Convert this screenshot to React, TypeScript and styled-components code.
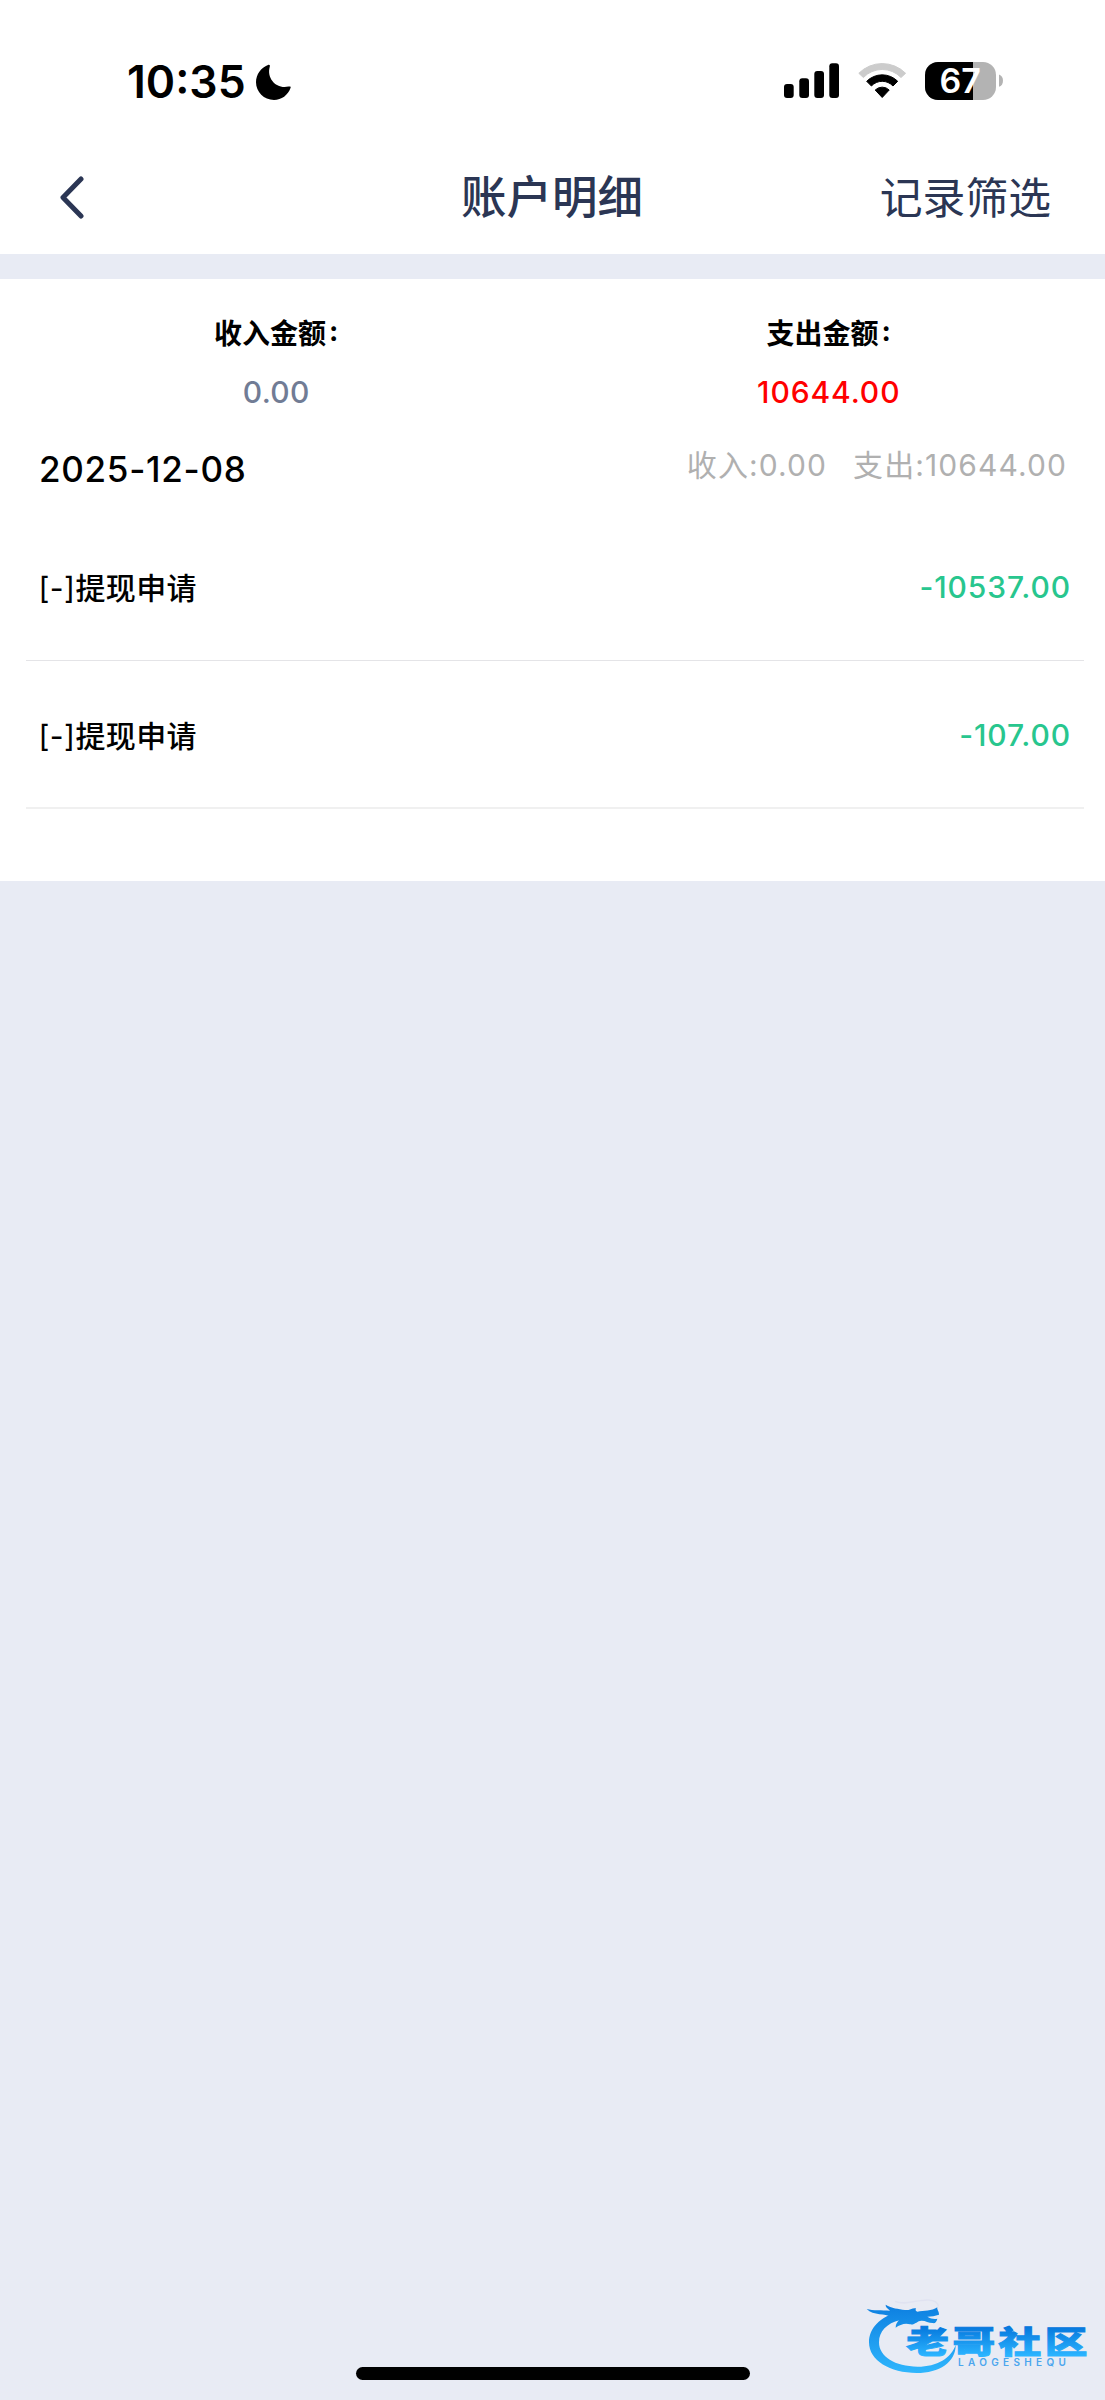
import styled, { createGlobalStyle } from "styled-components";

const Global = createGlobalStyle`
  * { box-sizing: border-box; }
  body { margin: 0; background: #e8ebf4; font-family: Inter, "Noto Sans CJK SC", sans-serif; }
`;

const Screen = styled.div`
  position: relative;
  display: flex;
  flex-direction: column;
  width: 1105px;
  height: 2400px;
  background: #e8ebf4;
  overflow: hidden;
`;

const StatusBar = styled.div`
  display: flex;
  align-items: center;
  justify-content: space-between;
  height: 150px;
  padding: 12px 102px 0 127px;
  background: #fff;
`;

const Group = styled.div<{ $gap: number; $top?: number }>`
  display: flex;
  align-items: center;
  gap: ${(p) => p.$gap}px;
  padding-top: ${(p) => p.$top ?? 0}px;
`;

const Clock = styled.span`
  font-size: 44.5px;
  font-weight: 600;
  line-height: 54px;
`;

const NavBar = styled.header`
  display: grid;
  grid-template-columns: 1fr auto 1fr;
  align-items: center;
  height: 104px;
  padding: 0 54px 10px 53px;
  background: #fff;
  color: #2b3654;
`;

const BackButton = styled.button`
  display: flex;
  justify-self: start;
  padding: 0 0 0 6px;
  border: 0;
  background: none;
  color: inherit;
`;

const Title = styled.h1`
  margin: 0;
  padding-top: 2px;
  font-size: 45.5px;
  font-weight: 500;
  line-height: 60px;
`;

const Filter = styled.button`
  justify-self: end;
  padding: 3px 0 0;
  border: 0;
  background: none;
  color: inherit;
  font: 400 42.8px/60px Inter, "Noto Sans CJK SC", sans-serif;
`;

const Panel = styled.main`
  display: flex;
  flex-direction: column;
  height: 602px;
  margin-top: 25px;
  background: #fff;
`;

const Totals = styled.section`
  display: grid;
  grid-template-columns: 1fr 1fr;
  padding-top: 35px;
  text-align: center;
`;

const TotalLabel = styled.div`
  font-size: 28px;
  font-weight: 700;
  line-height: 40px;
`;

const Colon = styled.span`
  margin-left: 3px;
  vertical-align: 3px;
  line-height: 1;
`;

const TotalValue = styled.div<{ $color: string; $tracking: number }>`
  margin-top: 18px;
  color: ${(p) => p.$color};
  font-size: 30px;
  font-weight: 500;
  line-height: 40px;
  letter-spacing: ${(p) => p.$tracking}px;
`;

const DayHeader = styled.div`
  display: flex;
  justify-content: space-between;
  padding: 33px 38px 0 39px;
  height: 102px;
`;

const DayDate = styled.span`
  font-size: 35px;
  font-weight: 500;
  line-height: 48px;
  letter-spacing: 0.7px;
`;

const DaySums = styled.span`
  display: flex;
  gap: 26px;
  color: #b0b0b0;
  font-size: 30px;
  line-height: 40px;
  letter-spacing: 1.1px;
`;

const List = styled.ul`
  margin: 0 21px 0 26px;
  padding: 0;
  list-style: none;
`;

const Row = styled.li`
  display: flex;
  align-items: center;
  justify-content: space-between;
  height: 147px;
  padding: 0 13px 0 12.5px;
  border-bottom: 1px solid #e4e4e7;
  font-size: 30px;
  font-weight: 500;

  &:last-child {
    height: 148px;
    padding-top: 1px;
    border-bottom: 2px solid #f0f0f0;
  }
`;

const RowLabel = styled.span`
  padding-bottom: 2px;
  letter-spacing: 0.4px;
`;

const Sign = styled.span`
  font-weight: 400;
`;

const Amount = styled.span`
  color: #28c68e;
  letter-spacing: 0.9px;
`;

const HomeIndicator = styled.div`
  position: absolute;
  left: 356px;
  top: 2367px;
  width: 394px;
  height: 13px;
  border-radius: 7px;
  background: #000;
`;

const Watermark = styled.svg`
  position: absolute;
  left: 850px;
  top: 2290px;
  width: 255px;
  height: 110px;
`;

const rows = [
  { label: "提现申请", amount: "-10537.00" },
  { label: "提现申请", amount: "-107.00" },
];

function Moon() {
  return (
    <svg width="35" height="37" viewBox="0 0 35 37">
      <path d="M12 1C13.600.500 14.300 1.300 13.700 3C10.500 14.500 20.500 25.500 32.500 22.600C34.200 22.200 35 22.700 34.600 23.800C32 31.200 25.600 36 18 36C8 36 0 28 0 18.300C0 10.500 5 3.500 12 1Z" />
    </svg>
  );
}

function Signal() {
  return (
    <svg width="56" height="38" viewBox="0 0 56 38">
      <rect x="0" y="22" width="9.700" height="14" rx="3" />
      <rect x="15.300" y="16.300" width="9.700" height="19.700" rx="3" />
      <rect x="30.300" y="9" width="9.700" height="27" rx="3" />
      <rect x="45.300" y="1.300" width="9.700" height="34.700" rx="3" />
    </svg>
  );
}

function Wifi() {
  return (
    <svg width="49" height="38" viewBox="0 0 49 38" strokeWidth="1" strokeLinejoin="round">
      <path fill="#ccc" stroke="#ccc" d="M.8 11.300A33 33 0 0 1 47.600 11.300L43 15.500A26 26 0 0 0 5.400 15.500Z" />
      <path stroke="#000" d="M8.700 19.300A21.800 21.800 0 0 1 39.700 19.300L35 24A14.800 14.800 0 0 0 13.400 24Z" />
      <path stroke="#000" d="M17.200 28A10 10 0 0 1 31.200 28L24.200 35.500Z" />
    </svg>
  );
}

function Battery() {
  return (
    <svg width="78" height="38" viewBox="0 0 78 38" overflow="visible">
      <defs>
        <clipPath id="charge">
          <rect width="48" height="38" />
        </clipPath>
      </defs>
      <rect width="71" height="38" rx="13" fill="#b3b3b3" />
      <rect width="71" height="38" rx="13" clipPath="url(#charge)" />
      <path fill="#b3b3b3" d="M74 12.500C76.500 13.300 78 15.700 78 18.700S76.500 24 74 24.800Z" />
      <text x="14.600" y="31" fill="#fff" fontFamily="Inter, sans-serif" fontSize="34" fontWeight="600">67</text>
    </svg>
  );
}

function CommunityLogo() {
  return (
    <Watermark viewBox="0 0 765 330">
      <defs>
        <linearGradient id="ring" gradientUnits="userSpaceOnUse" x1="0" y1="45" x2="0" y2="248">
          <stop offset="0" stopColor="#0d7fe0" />
          <stop offset="1" stopColor="#2fb6fd" />
        </linearGradient>
        <linearGradient id="name" gradientUnits="userSpaceOnUse" x1="0" y1="-108" x2="0" y2="10">
          <stop offset="0" stopColor="#0678dd" />
          <stop offset="1" stopColor="#2bb4ff" />
        </linearGradient>
      </defs>
      <g fill="url(#ring)">
        <path d="M145 66C90 80 57 115 57 157C57 212 120 249 200 249C268 249 318 216 317 164C304 204 262 230 203 230C135 230 87 200 87 157C87 124 110 100 150 90Z" />
        <path d="M50 57C70 63 95 60 120 62C112 55 106 50 107 44C125 56 145 56 165 60C178 62 188 52 198 55C196 60 196 63 202 65C222 62 245 64 262 52C260 60 268 64 267 74C255 78 245 79 232 80C242 86 252 88 262 86C260 95 255 101 248 99C235 99 225 91 214 92C202 92 194 106 180 103C165 98 150 104 137 113C137 103 141 97 147 91C136 91 128 87 121 80C108 70 70 78 50 57Z" />
      </g>
      <path d="M135 34C165 48 200 28 235 30C252 31 264 38 265 50" fill="none" stroke="#e0e3f1" strokeWidth="4" />
      <text
        transform="translate(169 189) scale(1 0.72)"
        fill="url(#name)"
        stroke="url(#name)"
        strokeWidth="4"
        fontFamily="'Noto Sans CJK SC', sans-serif"
        fontSize="128"
        fontWeight="900"
        letterSpacing="10.500"
      >
        老哥社区
      </text>
      <text x="324" y="229" fill="#4ba6ee" fontFamily="Inter, sans-serif" fontSize="30" fontWeight="600" letterSpacing="13">
        LAOGESHEQU
      </text>
    </Watermark>
  );
}

export default function App() {
  return (
    <Screen>
      <Global />
      <StatusBar>
        <Group $gap={10} $top={2}>
          <Clock>10:35</Clock>
          <Moon />
        </Group>
        <Group $gap={18}>
          <Signal />
          <Wifi />
          <Battery />
        </Group>
      </StatusBar>
      <NavBar>
        <BackButton aria-label="返回">
          <svg width="26" height="44" viewBox="0 0 26 44" fill="none" stroke="currentColor" strokeWidth="5" strokeLinecap="round" strokeLinejoin="round">
            <path d="M22 4L4 22.500L22 41" />
          </svg>
        </BackButton>
        <Title>账户明细</Title>
        <Filter>记录筛选</Filter>
      </NavBar>
      <Panel>
        <Totals>
          <div>
            <TotalLabel>收入金额<Colon>:</Colon></TotalLabel>
            <TotalValue $color="#717c95" $tracking={0.3}>0.00</TotalValue>
          </div>
          <div>
            <TotalLabel>支出金额<Colon>:</Colon></TotalLabel>
            <TotalValue $color="#ff0000" $tracking={0.9}>10644.00</TotalValue>
          </div>
        </Totals>
        <DayHeader>
          <DayDate>2025-12-08</DayDate>
          <DaySums>
            <span>收入:0.00</span>
            <span>支出:10644.00</span>
          </DaySums>
        </DayHeader>
        <List>
          {rows.map((r) => (
            <Row key={r.amount}>
              <RowLabel><Sign>[-]</Sign>{r.label}</RowLabel>
              <Amount>{r.amount}</Amount>
            </Row>
          ))}
        </List>
      </Panel>
      <CommunityLogo />
      <HomeIndicator />
    </Screen>
  );
}
